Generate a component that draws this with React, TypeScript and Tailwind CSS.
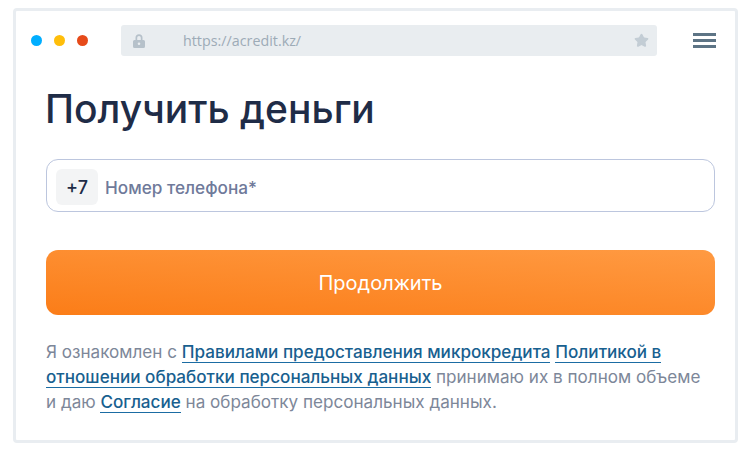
import { Star } from 'lucide-react'

function Dot({ className }: { className: string }) {
  return <span className={`h-[11px] w-[11px] rounded-full ${className}`} />
}

function LockIcon() {
  return (
    <svg viewBox="0 0 12 14" className="h-[14px] w-3 text-[#b6c1ca]" fill="currentColor">
      <path
        fillRule="evenodd"
        d="M2.5 6V3.8a3.5 3.5 0 0 1 7 0V6h1A1.5 1.5 0 0 1 12 7.5v5a1.5 1.5 0 0 1-1.5 1.5h-9A1.5 1.5 0 0 1 0 12.500v-5A1.500 1.500 0 0 1 1.500 6h1ZM4.200 6h3.600V3.800a1.800 1.800 0 0 0-3.600 0V6ZM6 8.500a1.300 1.300 0 1 0 0 2.600a1.300 1.300 0 0 0 0-2.600Z"
      />
    </svg>
  )
}

export default function App() {
  return (
    <div className="h-[453px] w-[751px] bg-white px-[13px] pt-2 font-['Inter',sans-serif]">
      <div className="h-[435px] w-[725px] rounded-[4px] border-[3px] border-[#e9edf1] bg-white">
        <div className="flex items-center pl-[15px] pr-[19px] pt-[14px]">
          <div className="flex w-[90px] gap-3">
            <Dot className="bg-[#00aeff]" />
            <Dot className="bg-[#ffbe0a]" />
            <Dot className="bg-[#e64a19]" />
          </div>
          <div className="flex h-[31px] w-[536px] items-center justify-between rounded-[3px] bg-[#e9edf0] pl-3 pr-[8px]">
            <div className="flex items-center gap-[38px]">
              <LockIcon />
              <span className="font-['Open_Sans',sans-serif] text-[14.3px] text-[#9dabb7]">https://acredit.kz/</span>
            </div>
            <Star className="h-[15px] w-[15px] fill-[#c3cdd5] text-[#c3cdd5]" />
          </div>
          <div className="ml-9 flex w-[23px] flex-col gap-[3px]">
            <span className="h-[3px] bg-[#5d7485]" />
            <span className="h-[3px] bg-[#5d7485]" />
            <span className="h-[3px] bg-[#5d7485]" />
          </div>
        </div>

        <div className="px-[30px]">
          <h1 className="-ml-px mt-6 text-[39px] font-medium leading-[58px] text-[#1f2c47]">Получить деньги</h1>

          <div className="mt-[21px] flex h-[53px] w-[669px] items-center gap-[7px] rounded-[12px] border border-[#bcc6de] pl-[9px] pt-[3px]">
            <span className="flex h-9 w-[42px] items-center justify-center rounded-[6px] bg-[#f3f4f5] pt-px text-[18px] font-medium text-[#1f2c47]">+7</span>
            <span className="pt-px text-[17.2px] font-medium text-[#6f7a9a]">Номер телефона*</span>
          </div>

          <button
            type="button"
            className="mt-[38px] flex h-[65px] w-[669px] items-center justify-center rounded-[12px] bg-[linear-gradient(184deg,#ff9a42_0%,#fb7d18_100%)] text-[20px] text-white"
          >
            Продолжить
          </button>

          <p className="mt-[24px] w-[662px] text-[17.1px] leading-[25px] text-[#7d8799]">
            Я ознакомлен с{' '}
            <a className="border-b border-[#1b6ca3] font-medium text-[#18608f]">Правилами предоставления микрокредита</a>{' '}
            <a className="border-b border-[#1b6ca3] font-medium text-[#18608f]">Политикой в отношении обработки персональных данных</a>{' '}
            принимаю их в полном объеме и даю{' '}
            <a className="border-b border-[#1b6ca3] font-medium text-[#18608f]">Согласие</a>{' '}
            на обработку персональных данных.
          </p>
        </div>
      </div>
    </div>
  )
}
